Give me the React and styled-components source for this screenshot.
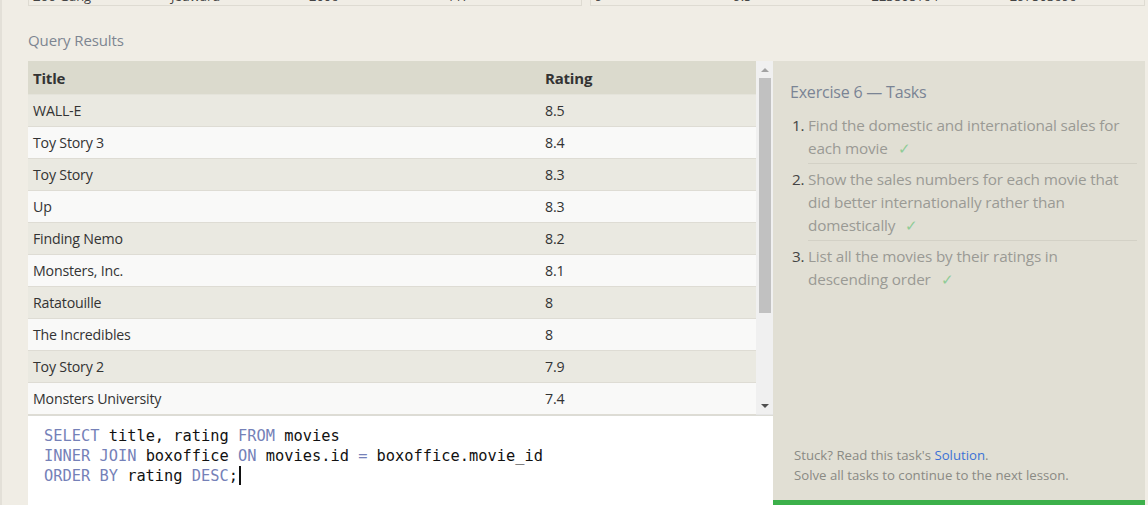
import React from 'react';
import styled, { createGlobalStyle } from 'styled-components';

const GlobalStyle = createGlobalStyle`
  html, body {
    margin: 0;
    padding: 0;
    background: #f0ede5;
    font-family: 'Open Sans', 'Noto Sans', sans-serif;
    overflow: hidden;
  }
`;

const Page = styled.div`
  width: 1148px;
  height: 505px;
  box-sizing: border-box;
  border-left: 2px solid #e3e0d8;
  padding: 0 3px 0 26px;
  display: flex;
  flex-direction: column;
  overflow: hidden;
`;

const PrevResults = styled.div`
  display: flex;
  gap: 8px;
  height: 6px;
`;

const PrevPanel = styled.div`
  flex: ${(p) => p.$grow};
  height: 6px;
  overflow: hidden;
  border: 1px solid #dedbd2;
  border-top: none;
  box-sizing: border-box;
  display: flex;
  font-size: 13px;
  color: #444;
  span {
    display: block;
    margin-top: -13px;
    width: ${(p) => p.$cell}px;
    padding-left: 4px;
  }
`;

const SectionLabel = styled.div`
  margin: 24px 0 0 0;
  height: 31px;
  font-size: 15px;
  color: #7d8591;
  letter-spacing: -0.1px;
`;

const Workspace = styled.div`
  display: flex;
  flex: 1;
  min-height: 0;
`;

const LeftColumn = styled.div`
  width: 745px;
  display: flex;
  flex-direction: column;
`;

const Results = styled.div`
  display: flex;
  height: 355px;
  border-bottom: 1px solid #dcdcd6;
  box-sizing: border-box;
`;

const Table = styled.div`
  flex: 1;
  overflow: hidden;
  font-size: 14.2px;
  color: #333;
`;

const Row = styled.div`
  display: grid;
  grid-template-columns: 511px 1fr;
  height: ${(p) => (p.$head ? 33 : 31)}px;
  align-items: center;
  background: ${(p) => (p.$head ? '#dbdacd' : p.$odd ? '#eae9e1' : '#f9f9f8')};
  border-bottom: 1px solid ${(p) => (p.$head ? '#e4e3da' : '#dedcd4')};
  font-weight: ${(p) => (p.$head ? 700 : 400)};
  font-size: ${(p) => (p.$head ? '15px' : 'inherit')};
  letter-spacing: -0.2px;
  div {
    padding-left: 5px;
  }
  div + div {
    padding-left: 6px;
  }
`;

const ScrollBar = styled.div`
  width: 17px;
  background: #f0f0f0;
  display: flex;
  flex-direction: column;
  align-items: center;
  border-bottom: 1px solid #e6e6e6;
`;

const Arrow = styled.div`
  height: 17px;
  width: 17px;
  display: flex;
  align-items: center;
  justify-content: center;
  svg {
    display: block;
  }
`;

const Thumb = styled.div`
  width: 12px;
  height: 235px;
  background: #c1c1c1;
`;

const Spacer = styled.div`
  flex: 1;
`;

const Editor = styled.div`
  flex: 1;
  background: #fff;
  padding: 10px 0 0 16px;
  font-family: 'DejaVu Sans Mono', 'Liberation Mono', monospace;
  font-size: 15.35px;
  line-height: 20px;
  color: #111;
  white-space: pre;
`;

const Kw = styled.span`
  color: #7581b8;
`;

const Caret = styled.span`
  display: inline-block;
  width: 2px;
  height: 19px;
  background: #111;
  vertical-align: -4px;
  margin-left: 1px;
`;

const TaskPanel = styled.div`
  flex: 1;
  background: #e1dfd4;
  display: flex;
  flex-direction: column;
  padding: 20px 0 0 17px;
  border-bottom: 5px solid #3cb04a;
  box-sizing: border-box;
`;

const TaskTitle = styled.div`
  font-size: 16px;
  color: #7a8494;
  margin-bottom: 7px;
  letter-spacing: -0.2px;
`;

const TaskList = styled.ol`
  margin: 0;
  padding: 0 8px 0 0;
  list-style: none;
`;

const Task = styled.li`
  display: flex;
  font-size: 15.3px;
  line-height: 23px;
  color: #9a9a94;
  padding: 4px 0 3px;
  letter-spacing: -0.15px;
  & + & {
    border-top: 1px solid #d3d1c6;
    margin-left: 18px;
  }
  & + & b {
    margin-left: -18px;
  }
`;

const TaskNum = styled.b`
  font-weight: 400;
  color: #444;
  width: 18px;
  flex: none;
  padding-left: 2px;
  box-sizing: border-box;
`;

const Check = styled.span`
  color: #8fcc97;
  margin-left: 10px;
`;

const Footer = styled.div`
  margin-top: auto;
  padding: 0 0 15px 4px;
  font-size: 13.2px;
  line-height: 20px;
  color: #8a8a84;
  a {
    color: #3c72d6;
    text-decoration: none;
  }
`;

const rows = [
  ['WALL-E', '8.5'],
  ['Toy Story 3', '8.4'],
  ['Toy Story', '8.3'],
  ['Up', '8.3'],
  ['Finding Nemo', '8.2'],
  ['Monsters, Inc.', '8.1'],
  ['Ratatouille', '8'],
  ['The Incredibles', '8'],
  ['Toy Story 2', '7.9'],
  ['Monsters University', '7.4'],
];

const tasks = [
  'Find the domestic and international sales for each movie',
  'Show the sales numbers for each movie that did better internationally rather than domestically',
  'List all the movies by their ratings in descending order',
];

const App = () => (
  <>
    <GlobalStyle />
    <Page>
      <PrevResults>
        <PrevPanel $grow="0 0 554px" $cell={138}>
          <span>Zoo Gang</span>
          <span>Jedward</span>
          <span>2006</span>
          <span>117</span>
        </PrevPanel>
        <PrevPanel $grow="1" $cell={138}>
          <span>9</span>
          <span>9.5</span>
          <span>223808164</span>
          <span>297503696</span>
        </PrevPanel>
      </PrevResults>
      <SectionLabel>Query Results</SectionLabel>
      <Workspace>
        <LeftColumn>
          <Results>
            <Table>
              <Row $head>
                <div>Title</div>
                <div>Rating</div>
              </Row>
              {rows.map(([title, rating], i) => (
                <Row key={title} $odd={i % 2 === 0}>
                  <div>{title}</div>
                  <div>{rating}</div>
                </Row>
              ))}
            </Table>
            <ScrollBar>
              <Arrow>
                <svg width="8" height="4" viewBox="0 0 8 4">
                  <path d="M0 4 L4 0 L8 4 Z" fill="#a3a3a3" />
                </svg>
              </Arrow>
              <Thumb />
              <Spacer />
              <Arrow>
                <svg width="8" height="4" viewBox="0 0 8 4">
                  <path d="M0 0 L8 0 L4 4 Z" fill="#505050" />
                </svg>
              </Arrow>
            </ScrollBar>
          </Results>
          <Editor>
            <Kw>SELECT</Kw> title, rating <Kw>FROM</Kw> movies{'\n'}
            <Kw>INNER JOIN</Kw> boxoffice <Kw>ON</Kw> movies.id <Kw>=</Kw> boxoffice.movie_id{'\n'}
            <Kw>ORDER BY</Kw> rating <Kw>DESC</Kw>;<Caret />
          </Editor>
        </LeftColumn>
        <TaskPanel>
          <TaskTitle>Exercise 6 — Tasks</TaskTitle>
          <TaskList>
            {tasks.map((t, i) => (
              <Task key={i}>
                <TaskNum>{i + 1}.</TaskNum>
                <span>
                  {t}
                  <Check>✓</Check>
                </span>
              </Task>
            ))}
          </TaskList>
          <Footer>
            Stuck? Read this task's <a href="#">Solution</a>.
            <br />
            Solve all tasks to continue to the next lesson.
          </Footer>
        </TaskPanel>
      </Workspace>
    </Page>
  </>
);

export default App;
